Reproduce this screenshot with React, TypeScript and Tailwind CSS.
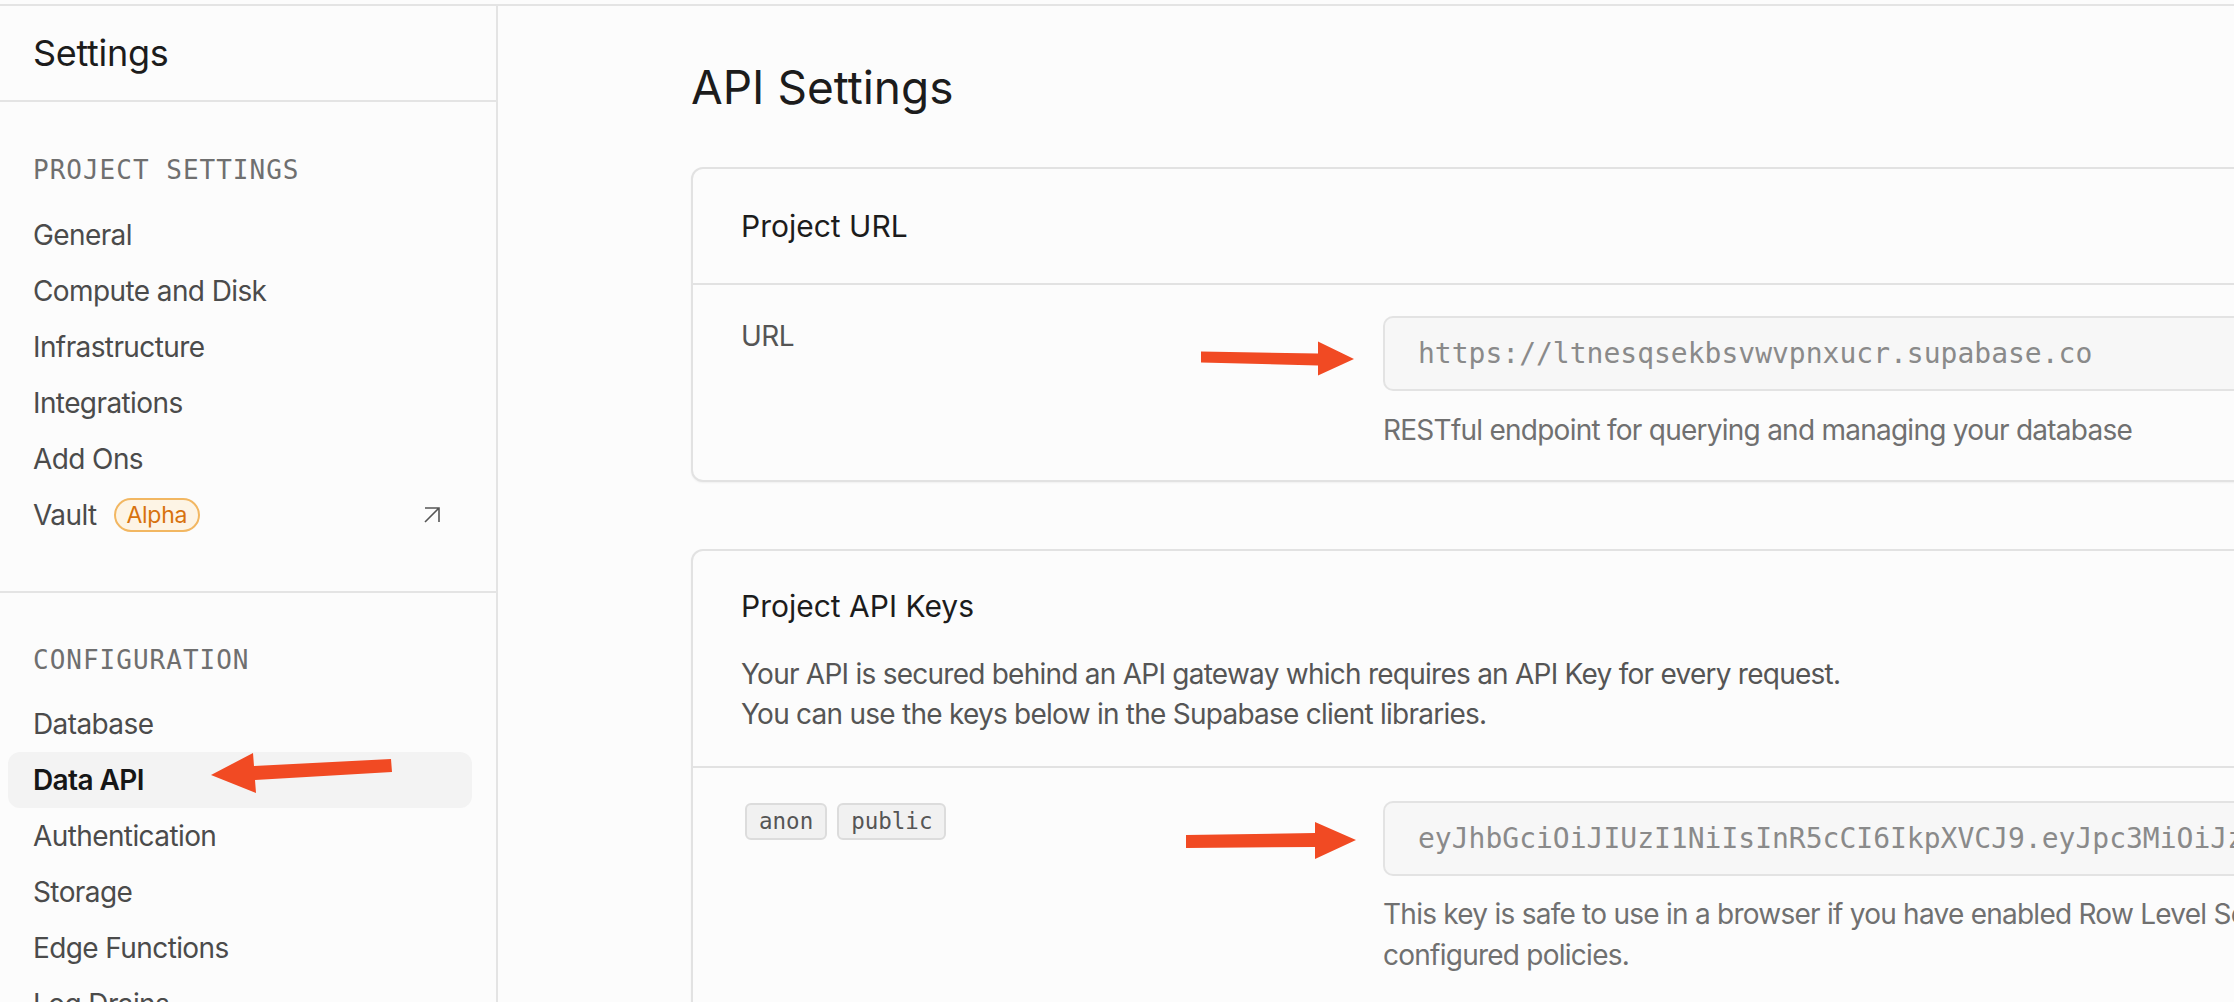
import clsx from "clsx"

const mono = "font-['DejaVu_Sans_Mono',monospace]"

const NavLabel = ({ children }: { children: string }) => (
  <div className={clsx(mono, "h-[40px] flex items-center pl-[33px] text-[26px] tracking-[1px] text-[#6f6f6f]")}>
    {children}
  </div>
)

const NavItem = ({ label, active, children }: { label: string; active?: boolean; children?: React.ReactNode }) => (
  <div
    className={clsx(
      "ml-[8px] mr-[24px] h-[56px] flex items-center pl-[25px] pr-[32px] rounded-[12px] text-[28px] tracking-[-0.6px]",
      active ? "bg-[#f3f3f3] font-semibold text-[#161616]" : "text-[#4b4b4b]"
    )}
  >
    <span>{label}</span>
    {children}
  </div>
)

const Arrows = () => (
  <svg className="absolute inset-0 pointer-events-none" width="2234" height="1002" viewBox="0 0 2234 1002">
    <g fill="#f14a23">
      <polygon points="211,775 253,753 254,766 391,759 392,772 255,780 256,793" />
      <polygon points="1201,351.5 1318,353.5 1318,341.5 1354,359 1318,375.5 1318,365.5 1201,362.5" />
      <polygon points="1186,835 1315,833 1315,822 1356,840 1315,859 1315,847 1186,848" />
    </g>
  </svg>
)

const Field = ({ value }: { value: string }) => (
  <div
    className={clsx(
      mono,
      "h-[75px] w-[1100px] flex items-center pl-[33px] rounded-[10px] border-2 border-[#e3e3e3] bg-[#f7f7f7] text-[28px] text-[#8a8a8a] whitespace-nowrap overflow-hidden"
    )}
  >
    {value}
  </div>
)

const Card = ({ children }: { children: React.ReactNode }) => (
  <section className="w-[1700px] rounded-[12px] border-2 border-[#e2e2e2] bg-[#fcfcfc] shadow-[0_1px_2px_rgba(0,0,0,0.05)]">
    {children}
  </section>
)

export default function App() {
  return (
    <div className="relative w-[2234px] h-[1002px] overflow-hidden bg-[#fcfcfc] font-['Inter',sans-serif]">
      <div className="h-[6px] border-b-2 border-[#e4e4e4]" />
      <div className="flex h-[996px]">
        <aside className="w-[498px] shrink-0 border-r-2 border-[#e4e4e4]">
          <div className="h-[96px] border-b-2 border-[#e4e4e4] flex items-center pl-[33px] text-[36px] tracking-[-0.3px] text-[#1c1c1c]">
            Settings
          </div>
          <div className="pt-[48px] pb-[48px] border-b-2 border-[#e4e4e4]">
            <NavLabel>PROJECT SETTINGS</NavLabel>
            <div className="mt-[17px]">
              <NavItem label="General" />
              <NavItem label="Compute and Disk" />
              <NavItem label="Infrastructure" />
              <NavItem label="Integrations" />
              <NavItem label="Add Ons" />
              <NavItem label="Vault">
                <span className="ml-[17px] h-[34px] px-[11px] flex items-center rounded-full border-2 border-[#f2b762] bg-[#fdf4e5] text-[23px] tracking-[-0.3px] text-[#d8720e]">
                  Alpha
                </span>
                <svg className="ml-auto" width="16" height="16" viewBox="0 0 16 16" fill="none" stroke="#555" strokeWidth="1.6">
                  <path d="M1 15 L15 1 M1 1 H15 V15" />
                </svg>
              </NavItem>
            </div>
          </div>
          <div className="pt-[47px]">
            <NavLabel>CONFIGURATION</NavLabel>
            <div className="mt-[16px]">
              <NavItem label="Database" />
              <NavItem label="Data API" active />
              <NavItem label="Authentication" />
              <NavItem label="Storage" />
              <NavItem label="Edge Functions" />
              <NavItem label="Log Drains" />
            </div>
          </div>
        </aside>

        <main className="flex-1 pl-[193px] pt-[51px]">
          <h1 className="text-[46px] leading-[60px] text-[#1c1c1c]">API Settings</h1>

          <div className="mt-[50px]">
            <Card>
              <div className="h-[116px] flex items-center px-[48px] border-b-2 border-[#e2e2e2] text-[30px] text-[#1c1c1c]">
                Project URL
              </div>
              <div className="flex pl-[48px] pt-[31px] pb-[30px]">
                <div className="w-[642px] shrink-0 text-[28px] leading-[40px] tracking-[-0.6px] text-[#555]">URL</div>
                <div>
                  <Field value="https://ltnesqsekbsvwvpnxucr.supabase.co" />
                  <p className="mt-[19px] text-[28px] leading-[40px] tracking-[-0.75px] text-[#707070]">
                    RESTful endpoint for querying and managing your database
                  </p>
                </div>
              </div>
            </Card>
          </div>

          <div className="mt-[67px]">
            <Card>
              <div className="px-[48px] pt-[35px] pb-[32px] border-b-2 border-[#e2e2e2]">
                <h2 className="text-[30px] leading-[40px] text-[#1c1c1c]">Project API Keys</h2>
                <p className="mt-[28px] text-[28px] leading-[40px] tracking-[-0.75px] text-[#555]">
                  Your API is secured behind an API gateway which requires an API Key for every request.
                  <br />
                  You can use the keys below in the Supabase client libraries.
                </p>
              </div>
              <div className="flex pl-[48px] pt-[33px] pb-[40px]">
                <div className="w-[642px] shrink-0 flex gap-[10px] pt-[2px] pl-[4px] items-start">
                  {["anon", "public"].map((t) => (
                    <span
                      key={t}
                      className={clsx(
                        mono,
                        "h-[37px] px-[12px] flex items-center rounded-[6px] border-2 border-[#dcdcdc] bg-[#f1f1f1] text-[22.5px] text-[#555]"
                      )}
                    >
                      {t}
                    </span>
                  ))}
                </div>
                <div>
                  <Field value="eyJhbGciOiJIUzI1NiIsInR5cCI6IkpXVCJ9.eyJpc3MiOiJzdXBhYmFzZSIsInJlZiI6Imx0bmVzcXNla2JzdndwcG54dWNyIiwicm9sZSI6ImFub24i" />
                  <p className="mt-[18px] text-[28px] leading-[41px] tracking-[-0.75px] text-[#707070] whitespace-nowrap">
                    This key is safe to use in a browser if you have enabled Row Level Security for your tables and
                    <br />
                    configured policies.
                  </p>
                </div>
              </div>
            </Card>
          </div>
        </main>
      </div>
      <Arrows />
    </div>
  )
}
